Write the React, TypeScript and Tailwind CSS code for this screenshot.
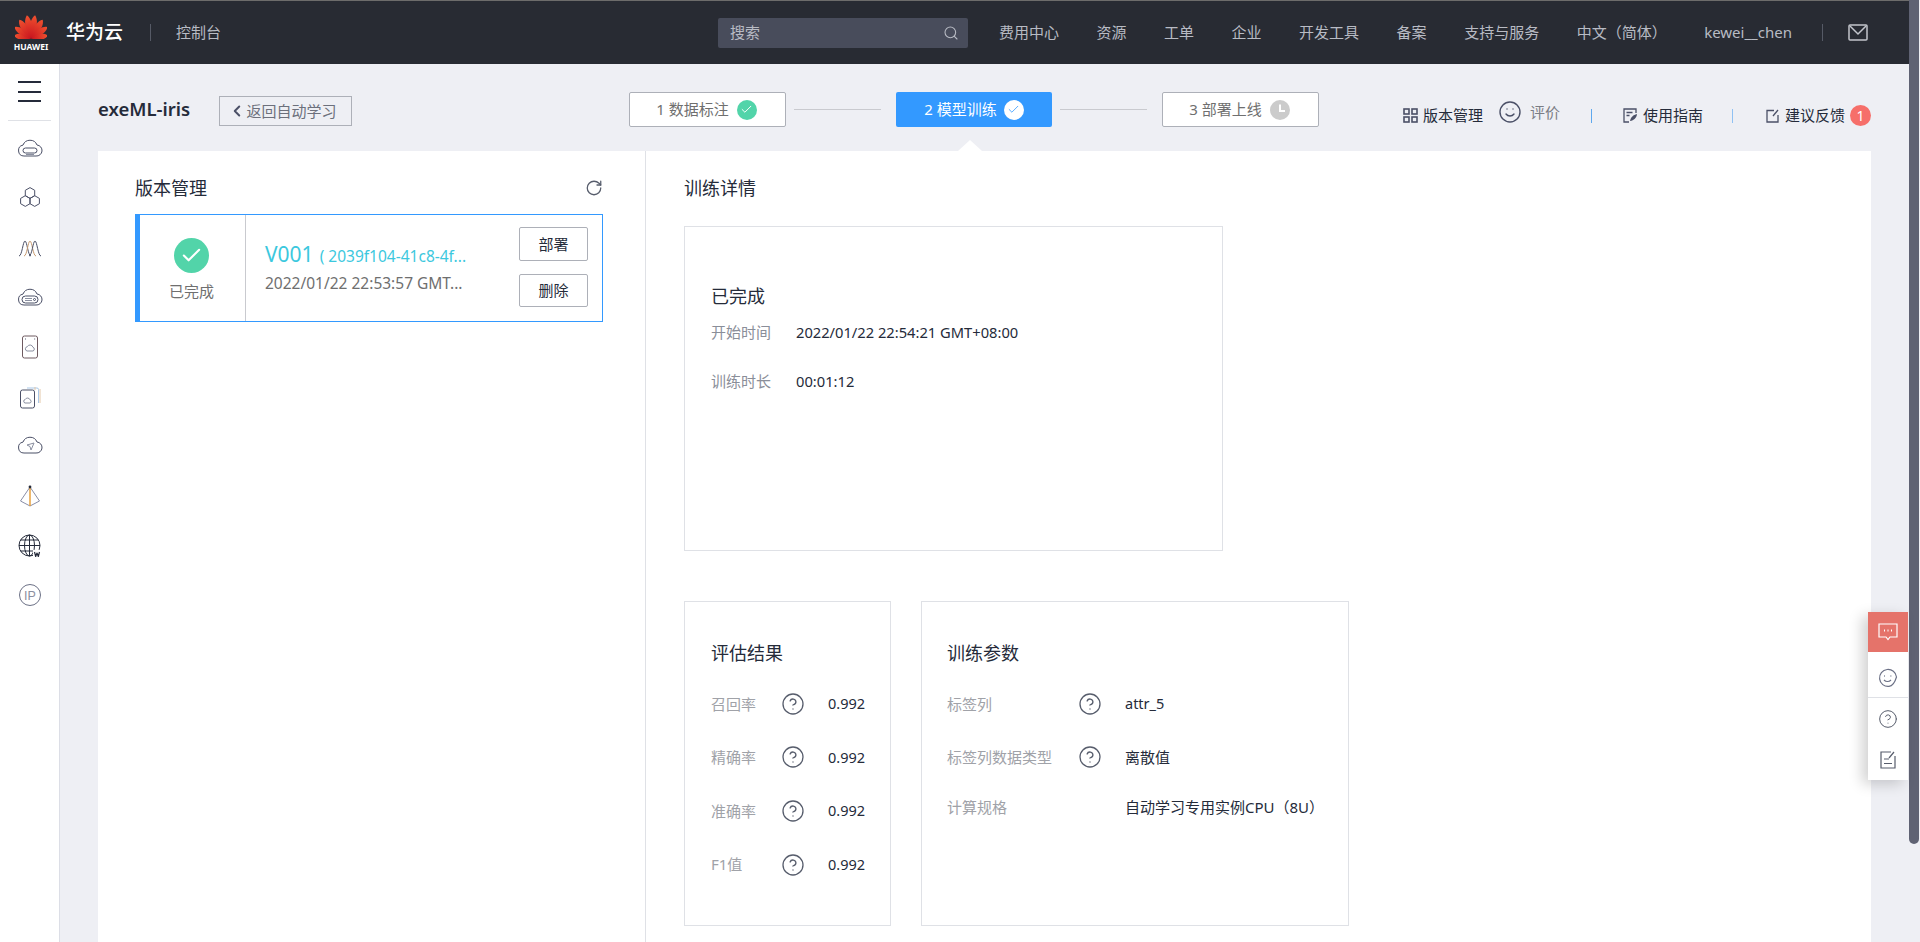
import { Check, ChevronLeft, CircleHelp, RotateCw, Search, Smile } from 'lucide-react';

const navItems = ['费用中心', '资源', '工单', '企业', '开发工具', '备案', '支持与服务', '中文（简体）'];

const petals = [
  { a: -80, l: 17, w: 4.5 },
  { a: -55, l: 20, w: 4.5 },
  { a: -32, l: 22, w: 5 },
  { a: -10, l: 23.5, w: 5 },
  { a: 10, l: 23.5, w: 5 },
  { a: 32, l: 22, w: 5 },
  { a: 55, l: 20, w: 4.5 },
  { a: 80, l: 17, w: 4.5 },
];

function HuaweiLogo() {
  return (
    <div className="flex w-[32px] flex-col items-center">
      <svg width="32" height="25" viewBox="0 0 32 25">
        <defs>
          <linearGradient id="petal" x1="0" y1="0" x2="0" y2="1">
            <stop offset="0" stopColor="#f0512f" />
            <stop offset="1" stopColor="#c8141e" />
          </linearGradient>
        </defs>
        {petals.map((p) => (
          <path
            key={p.a}
            d={`M16 24.5C${16 - p.w} ${24.5 - p.l * 0.55} ${16 - p.w * 0.7} ${24.5 - p.l * 0.85} 16 ${24.5 - p.l}C${16 + p.w * 0.7} ${24.5 - p.l * 0.85} ${16 + p.w} ${24.5 - p.l * 0.55} 16 24.5Z`}
            fill="url(#petal)"
            transform={`rotate(${p.a} 16 24.5)`}
          />
        ))}
      </svg>
      <span className="mt-[3px] text-[8.5px] leading-[9px] font-bold whitespace-nowrap text-white">HUAWEI</span>
    </div>
  );
}

const cloud = 'M7 20a5.500 5.500 0 0 1-1-10.900A7.500 7.500 0 0 1 20 9a5.500 5.500 0 0 1-1 11z';

function SideIcon({ index }: { index: number }) {
  const common = { fill: 'none', stroke: '#4b5067', strokeWidth: 1, strokeLinejoin: 'round' as const };
  return (
    <svg width="26" height="26" viewBox="0 0 26 26" {...common}>
      {index === 0 && (
        <g>
          <path d={cloud} />
          <rect x="6" y="12" width="14" height="5" rx="2.500" />
          <path d="M9 18.500h8" stroke="#8a8fa0" />
        </g>
      )}
      {index === 1 && (
        <g>
          <path d="M13 2.600l4.700 2.700v5.400L13 13.400l-4.700-2.700V5.300z" />
          <path d="M8.300 10.700l4.700 2.700v5.300l-4.700 2.700-4.700-2.700v-5.300z" />
          <path d="M17.700 10.700l4.700 2.700v5.300l-4.700 2.700-4.700-2.700v-5.300z" />
        </g>
      )}
      {index === 2 && (
        <g>
          <path d="M2 21C5 21 6 6 8 6S11 21 14 21" />
          <path d="M7 21C10 21 11 6 13 6S16 21 19 21" stroke="#c79a70" />
          <path d="M12 21C15 21 16 6 18 6S21 21 24 21" />
        </g>
      )}
      {index === 3 && (
        <g>
          <path d={cloud} />
          <rect x="5" y="11" width="16" height="7" rx="3.500" />
          <path d="M8 13.500h7M8 15.500h7" stroke="#8a8fa0" />
          <circle cx="17.500" cy="14.500" r="1" />
        </g>
      )}
      {index === 4 && (
        <g>
          <rect x="5.500" y="2" width="15" height="22" rx="2" stroke="#6e5a60" />
          <path d="M10 17a2.200 2.200 0 0 1 .3-4.300 3 3 0 0 1 5.600.5A2 2 0 0 1 16 17z" stroke="#8a8fa0" />
          <path d="M8 5h.6M17.500 5h.6" strokeWidth="1.400" />
        </g>
      )}
      {index === 5 && (
        <g>
          <path d="M10 4h10a1.500 1.500 0 0 1 1.500 1.500V19" stroke="#a9c8e8" />
          <path d="M18 3v3M23 5v14" stroke="#e3c7a8" />
          <rect x="3.500" y="6" width="14" height="18" rx="2" />
          <path d="M8 19a1.800 1.800 0 0 1 .2-3.500 2.600 2.600 0 0 1 4.800.3A1.700 1.700 0 0 1 13 19z" stroke="#8a8fa0" />
        </g>
      )}
      {index === 6 && (
        <g>
          <path d={cloud} />
          <path d="M10 12l7-2-3 7-1-3.500z" stroke="#8a8fa0" />
        </g>
      )}
      {index === 7 && (
        <g>
          <path d="M13 4L3.500 18l9.500 5 9.500-5z" stroke="#8a8fa8" />
          <path d="M13 4v19" stroke="#e59a32" strokeWidth="1.400" />
          <circle cx="13" cy="4" r="1.400" fill="#252b3a" stroke="none" />
        </g>
      )}
      {index === 8 && (
        <g stroke="#252b3a">
          <circle cx="12.500" cy="12.500" r="10.500" />
          <ellipse cx="12.500" cy="12.500" rx="5" ry="10.500" />
          <path d="M2 12.500h21M3.500 7h18M3.500 18h18M12.500 2v21" />
          <rect x="16" y="17" width="10" height="8" fill="#fff" stroke="none" />
          <path d="M17.500 19l1.200 4.500 1.300-3.500 1.300 3.500 1.200-4.500" strokeWidth="1.200" />
        </g>
      )}
      {index === 9 && <circle cx="13" cy="13" r="10.500" stroke="#6c7186" />}
      {index === 9 && (
        <text x="13" y="17.500" textAnchor="middle" fontSize="12.500" fill="#8a8fa0" stroke="none" fontFamily="Liberation Sans">
          IP
        </text>
      )}
    </svg>
  );
}

function Sidebar() {
  return (
    <aside className="flex w-[60px] shrink-0 flex-col items-center border-r border-[#dcdee6] bg-white">
      <div className="flex h-[57px] w-[43px] shrink-0 flex-col justify-center gap-[7.5px] border-b border-[#dfe1e6] pb-[1px]">
        <span className="mx-auto block h-[2px] w-[23px] bg-[#252b3a]" />
        <span className="mx-auto block h-[2px] w-[23px] bg-[#252b3a]" />
        <span className="mx-auto block h-[2px] w-[23px] bg-[#252b3a]" />
      </div>
      <div className="mt-[3px] flex flex-col">
        {Array.from({ length: 10 }).map((_, i) => (
          <div key={i} className="flex h-[49.6px] w-[43px] items-center justify-center">
            <SideIcon index={i} />
          </div>
        ))}
      </div>
    </aside>
  );
}

function Header() {
  return (
    <header className="flex h-[64px] shrink-0 items-center border-t border-[#6d6c6b] bg-[#282b33] pl-[15px] text-[15px] text-[#b8bbc4]">
      <HuaweiLogo />
      <span className="ml-[19px] text-[19px] font-medium text-white">华为云</span>
      <span className="ml-[27px] h-[17px] w-px bg-[#565a66]" />
      <span className="ml-[25px]">控制台</span>
      <div className="ml-[497px] flex h-[30px] w-[250px] items-center justify-between rounded-[2px] bg-[#484c5b] pr-[9px] pl-[12px]">
        <span>搜索</span>
        <Search className="h-[16px] w-[16px]" strokeWidth={1.6} />
      </div>
      <nav className="ml-[31px] flex items-center gap-[37.5px]">
        {navItems.map((n) => (
          <span key={n} className="whitespace-nowrap">
            {n}
          </span>
        ))}
        <span>kewei__chen</span>
      </nav>
      <span className="ml-[30px] h-[17px] w-px bg-[#565a66]" />
      <svg className="ml-[25px]" width="20" height="17" viewBox="0 0 20 17" fill="none" stroke="#c2c5cc" strokeWidth="1.500">
        <rect x="1" y="1" width="18" height="15" rx="1" />
        <path d="M2 2l8 8 8-8" />
      </svg>
    </header>
  );
}

function StepBox({ label, state }: { label: string; state: 'done' | 'active' | 'wait' }) {
  if (state === 'active') {
    return (
      <div className="flex h-[35px] w-[156px] items-center justify-center gap-[7px] rounded-[2px] bg-[#3399ff] text-[15px] text-white">
        {label}
        <span className="flex h-[20px] w-[20px] items-center justify-center rounded-full bg-white">
          <Check className="h-[13px] w-[13px] text-[#3399ff]" strokeWidth={1.5} />
        </span>
      </div>
    );
  }
  return (
    <div className="flex h-[35px] w-[157px] items-center justify-center gap-[8px] rounded-[2px] border border-[#adb0b8] bg-white pr-[2px] text-[15px] text-[#6f6f6f]">
      {label}
      {state === 'done' ? (
        <span className="flex h-[20px] w-[20px] items-center justify-center rounded-full bg-[#52d4a9]">
          <Check className="h-[13px] w-[13px] text-white" strokeWidth={1.8} />
        </span>
      ) : (
        <svg width="20" height="20" viewBox="0 0 20 20">
          <circle cx="10" cy="10" r="10" fill="#cbcbcb" />
          <path d="M10 4.500V11h5" fill="none" stroke="#fff" strokeWidth="2" />
        </svg>
      )}
    </div>
  );
}

function Toolbar() {
  return (
    <div className="relative flex h-[87px] shrink-0 pt-[28px]">
      <div className="flex w-[531px] shrink-0 items-start">
        <span className="mt-[5px] w-[92px] text-[18.5px] leading-[24px] font-semibold whitespace-nowrap text-[#252b3a]">exeML-iris</span>
        <button className="mt-[4px] ml-[29px] flex h-[30px] w-[133px] items-center justify-center border border-[#adb0b8] pr-[6px] text-[15px] text-[#6c707c]">
          <ChevronLeft className="h-[18px] w-[18px] text-[#4b5067]" strokeWidth={2.6} />
          返回自动学习
        </button>
      </div>
      <div className="flex h-[35px] items-center">
        <StepBox label="1 数据标注" state="done" />
        <span className="mr-[15px] ml-[8px] h-px w-[87px] bg-[#c9cacf]" />
        <StepBox label="2 模型训练" state="active" />
        <span className="mr-[15px] ml-[8px] h-px w-[87px] bg-[#c9cacf]" />
        <StepBox label="3 部署上线" state="wait" />
      </div>
      <div className="flex h-[35px] flex-1 items-center justify-end text-[15px] text-[#252b3a]">
        <svg className="mt-[12px]" width="15" height="15" viewBox="0 0 15 15" fill="none" stroke="#4b5067" strokeWidth="1.600">
          <rect x="1" y="1" width="5" height="5" />
          <rect x="9" y="1" width="5" height="5" />
          <rect x="1" y="9" width="5" height="5" />
          <rect x="9" y="9" width="5" height="5" />
        </svg>
        <span className="mt-[12px] ml-[5px]">版本管理</span>
        <Smile className="mt-[5px] ml-[15px] h-[24px] w-[24px] text-[#4b5067]" strokeWidth={1.4} />
        <span className="mt-[5px] ml-[8px] text-[#7b7d85]">评价</span>
        <span className="mt-[12px] ml-[31px] h-[14px] w-px bg-[#5ea8ee]" />
        <svg className="mt-[12px] ml-[31px]" width="15" height="15" viewBox="0 0 15 15" fill="none" stroke="#4b5067" strokeWidth="1.300">
          <path d="M13 5V1H1v13h5" />
          <path d="M3.500 4.500h6M3.500 7.500h3" />
          <path d="M7 13c1-4 3-6 7-7-.5 4-3 6.500-7 7z" fill="#4b5067" stroke="none" />
        </svg>
        <span className="mt-[12px] ml-[5px]">使用指南</span>
        <span className="mt-[12px] ml-[29px] h-[14px] w-px bg-[#8fc1f3]" />
        <svg className="mt-[12px] ml-[33px]" width="14" height="14" viewBox="0 0 14 14" fill="none" stroke="#4b5067" strokeWidth="1.300">
          <path d="M8 1.500H1v11.500h11V6" />
          <path d="M7 7l5-6" />
        </svg>
        <span className="mt-[12px] ml-[5px]">建议反馈</span>
        <span className="mt-[12px] ml-[5px] flex h-[21px] w-[21px] items-center justify-center rounded-full bg-[#f66f6a] text-[14px] text-white">
          1
        </span>
      </div>
      <span className="absolute bottom-0 left-[860px] h-0 w-0 border-x-[12px] border-b-[11px] border-x-transparent border-b-white" />
    </div>
  );
}

function VersionPanel() {
  return (
    <section className="w-[548px] shrink-0 border-r border-[#dfe1e6] pt-[26px] pr-[42px] pl-[37px]">
      <div className="flex h-[22px] items-center justify-between">
        <h2 className="text-[18px] text-[#252b3a]">版本管理</h2>
        <RotateCw className="h-[18px] w-[18px] text-[#575d6c]" strokeWidth={1.7} />
      </div>
      <div className="mt-[15px] flex h-[108px] border border-l-[5px] border-[#3399ff]">
        <div className="flex w-[106px] shrink-0 flex-col items-center border-r border-[#c9cacf] pt-[23px] pr-[2px]">
          <span className="flex h-[35px] w-[35px] items-center justify-center rounded-full bg-[#52d4a9]">
            <Check className="h-[23px] w-[23px] text-white" strokeWidth={2.2} />
          </span>
          <span className="mt-[8px] text-[15px] leading-[20px] text-[#6f6f6f]">已完成</span>
        </div>
        <div className="flex min-w-0 flex-1 items-center pr-[14px] pl-[19px]">
          <div className="mb-[3px] min-w-0 flex-1">
            <p className="leading-[28px] whitespace-nowrap text-[#3cc8de]">
              <span className="text-[21px]">V001</span>
              <span className="ml-[6px] text-[15.5px]">( 2039f104-41c8-4f...</span>
            </p>
            <p className="mt-[3px] text-[15.5px] leading-[20px] whitespace-nowrap text-[#6f6f6f]">2022/01/22 22:53:57 GMT...</p>
          </div>
          <div className="mb-[2px] flex flex-col gap-[13px] text-[15px] text-[#252b3a]">
            <button className="h-[34px] w-[69px] rounded-[2px] border border-[#adb0b8]">部署</button>
            <button className="h-[33px] w-[69px] rounded-[2px] border border-[#adb0b8]">删除</button>
          </div>
        </div>
      </div>
    </section>
  );
}

function ResultRow({ label, value, labelWidth, help = true, tall, cjk }: { label: string; value: string; labelWidth: string; help?: boolean; tall: string; cjk?: boolean }) {
  return (
    <div className={`flex items-center ${tall}`}>
      <span className={`${labelWidth} shrink-0 text-[15px] whitespace-nowrap text-[#a0a2a8]`}>{label}</span>
      <span className="flex w-[24px] shrink-0 justify-center">
        {help && <CircleHelp className="h-[24px] w-[24px] text-[#575d6c]" strokeWidth={1.3} />}
      </span>
      <span className={`ml-[23px] whitespace-nowrap text-[#252b3a] ${cjk ? 'text-[15px]' : 'text-[14.5px]'}`}>{value}</span>
    </div>
  );
}

function DetailPanel() {
  return (
    <section className="flex-1 pt-[26px] pl-[38px]">
      <h2 className="text-[18px] leading-[22px] text-[#252b3a]">训练详情</h2>
      <div className="mt-[27px] h-[325px] w-[539px] border border-[#dfe1e6] px-[26px] pt-[56px]">
        <h3 className="text-[18px] leading-[26px] text-[#252b3a]">已完成</h3>
        <div className="mt-[13px] flex flex-col gap-[29px] leading-[20px]">
          <p className="flex">
            <span className="w-[85px] text-[15px] text-[#8a8e99]">开始时间</span>
            <span className="text-[14.7px] text-[#252b3a]">2022/01/22 22:54:21 GMT+08:00</span>
          </p>
          <p className="flex">
            <span className="w-[85px] text-[15px] text-[#8a8e99]">训练时长</span>
            <span className="text-[14.7px] text-[#252b3a]">00:01:12</span>
          </p>
        </div>
      </div>
      <div className="mt-[50px] flex gap-[30px]">
        <div className="h-[325px] w-[207px] border border-[#dfe1e6] px-[26px] pt-[38px]">
          <h3 className="mb-[11px] text-[18px] leading-[26px] text-[#252b3a]">评估结果</h3>
          <ResultRow label="召回率" value="0.992" labelWidth="w-[70px]" tall="h-[53.6px]" />
          <ResultRow label="精确率" value="0.992" labelWidth="w-[70px]" tall="h-[53.6px]" />
          <ResultRow label="准确率" value="0.992" labelWidth="w-[70px]" tall="h-[53.6px]" />
          <ResultRow label="F1值" value="0.992" labelWidth="w-[70px]" tall="h-[53.6px]" />
        </div>
        <div className="h-[325px] w-[428px] border border-[#dfe1e6] px-[25px] pt-[38px]">
          <h3 className="mb-[11px] text-[18px] leading-[26px] text-[#252b3a]">训练参数</h3>
          <ResultRow label="标签列" value="attr_5" labelWidth="w-[131px]" tall="h-[53.6px]" />
          <ResultRow label="标签列数据类型" value="离散值" labelWidth="w-[131px]" tall="h-[53.6px]" cjk />
          <ResultRow label="计算规格" value="自动学习专用实例CPU（8U）" labelWidth="w-[131px]" help={false} tall="h-[46px]" cjk />
        </div>
      </div>
    </section>
  );
}

function FloatWidget() {
  return (
    <div className="absolute top-[612px] right-[1px] flex w-[40px] flex-col bg-white shadow-[-6px_4px_14px_rgba(0,0,0,0.18)]">
      <div className="flex h-[40px] items-center justify-center bg-[#e5736a]">
        <svg width="20" height="20" viewBox="0 0 20 20" fill="none" stroke="#fff" strokeWidth="1.200">
          <path d="M1 2h18v13h-7l-2 2.500L8 15H1z" />
          <path d="M6 8.500h1M9.500 8.500h1M13 8.500h1" strokeWidth="1.800" />
        </svg>
      </div>
      <div className="mt-[6px] flex h-[40px] items-center justify-center border-b border-[#dfe1e6]">
        <svg width="20" height="20" viewBox="0 0 20 20" fill="none" stroke="#6c7186" strokeWidth="1.200">
          <path d="M18.500 9A8.500 8.500 0 1 0 11 18.400C15 18 17 14 18.500 9z" />
          <path d="M6 8h.8M12.500 8h.8" strokeWidth="1.600" />
          <path d="M6 12c2 2 5 2 7 0" />
        </svg>
      </div>
      <div className="flex h-[42px] items-center justify-center">
        <CircleHelp className="h-[20px] w-[20px] text-[#575d6c]" strokeWidth={1.2} />
      </div>
      <div className="flex h-[40px] items-center justify-center">
        <svg width="16" height="18" viewBox="0 0 16 18" fill="none" stroke="#575d6c" strokeWidth="1.200">
          <path d="M11 1H1v16h14V5" />
          <path d="M4 8h5M4 12.500h8M9 7l5-6" />
        </svg>
      </div>
    </div>
  );
}

export default function App() {
  return (
    <div className="flex h-[942px] w-full overflow-hidden bg-[#eeeff4] font-['Noto_Sans','Noto_Sans_CJK_SC',sans-serif]">
      <div className="relative flex min-w-0 flex-1 flex-col">
        <Header />
        <div className="flex min-h-0 flex-1">
          <Sidebar />
          <main className="flex min-w-0 flex-1 flex-col overflow-hidden bg-[#eeeff4] px-[38px]">
            <Toolbar />
            <div className="flex flex-1 bg-white">
              <VersionPanel />
              <DetailPanel />
            </div>
          </main>
        </div>
        <FloatWidget />
      </div>
      <div className="w-[11px] shrink-0">
        <div className="h-[844px] w-[10px] rounded-b-[5px] bg-[#5f6273]" />
      </div>
    </div>
  );
}
